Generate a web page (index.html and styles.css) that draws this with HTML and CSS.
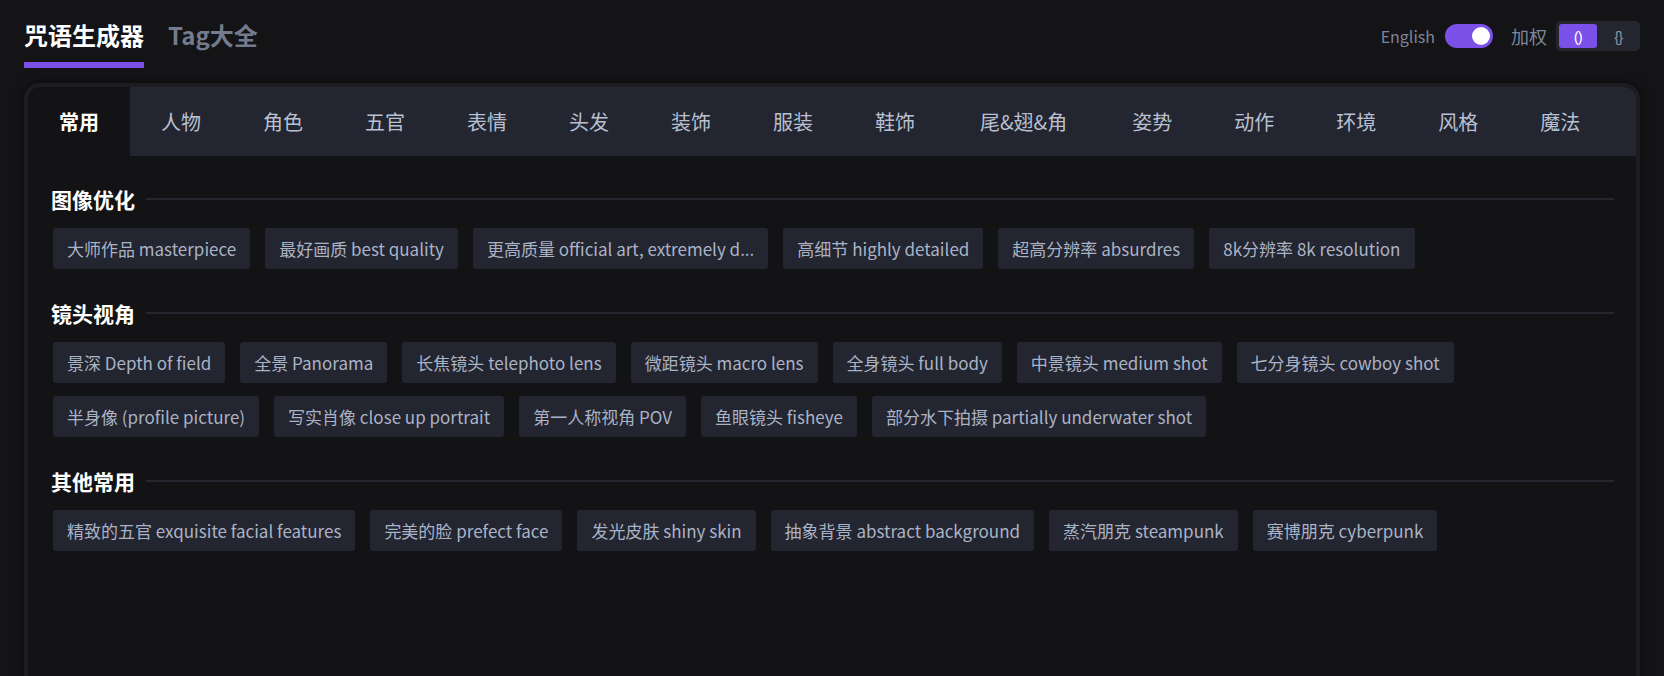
FILE: index.html
```html
<!DOCTYPE html>
<html lang="zh-CN">
<head>
    <meta charset="UTF-8">
    <meta name="viewport" content="width=device-width, initial-scale=1.0">
    <title>咒语生成器</title>
    <link rel="stylesheet" href="styles.css">
</head>
<body>
    <div class="topbar">
        <nav class="main-nav">
            <a class="main-tab active">咒语生成器</a>
            <a class="main-tab">Tag大全</a>
        </nav>
        <div class="controls">
            <span class="lang-label">English</span>
            <span class="switch on"><span class="knob"></span></span>
            <span class="weight-label">加权</span>
            <div class="seg">
                <span class="seg-item active">()</span>
                <span class="seg-item">{}</span>
            </div>
        </div>
    </div>

    <div class="card">
        <div class="tabs">
            <span class="tab active">常用</span>
            <span class="tab">人物</span>
            <span class="tab">角色</span>
            <span class="tab">五官</span>
            <span class="tab">表情</span>
            <span class="tab">头发</span>
            <span class="tab">装饰</span>
            <span class="tab">服装</span>
            <span class="tab">鞋饰</span>
            <span class="tab wide">尾&amp;翅&amp;角</span>
            <span class="tab">姿势</span>
            <span class="tab">动作</span>
            <span class="tab">环境</span>
            <span class="tab">风格</span>
            <span class="tab">魔法</span>
        </div>

        <div class="tab-body">
            <section class="group">
                <h3 class="group-title">图像优化</h3>
                <div class="chips">
                    <span class="chip">大师作品 masterpiece</span>
                    <span class="chip">最好画质 best quality</span>
                    <span class="chip">更高质量 official art, extremely d...</span>
                    <span class="chip">高细节 highly detailed</span>
                    <span class="chip">超高分辨率 absurdres</span>
                    <span class="chip">8k分辨率 8k resolution</span>
                </div>
            </section>

            <section class="group">
                <h3 class="group-title">镜头视角</h3>
                <div class="chips">
                    <span class="chip">景深 Depth of field</span>
                    <span class="chip">全景 Panorama</span>
                    <span class="chip">长焦镜头 telephoto lens</span>
                    <span class="chip">微距镜头 macro lens</span>
                    <span class="chip">全身镜头 full body</span>
                    <span class="chip">中景镜头 medium shot</span>
                    <span class="chip">七分身镜头 cowboy shot</span>
                    <span class="chip">半身像 (profile picture)</span>
                    <span class="chip">写实肖像 close up portrait</span>
                    <span class="chip">第一人称视角 POV</span>
                    <span class="chip">鱼眼镜头 fisheye</span>
                    <span class="chip">部分水下拍摄 partially underwater shot</span>
                </div>
            </section>

            <section class="group">
                <h3 class="group-title">其他常用</h3>
                <div class="chips">
                    <span class="chip">精致的五官 exquisite facial features</span>
                    <span class="chip">完美的脸 prefect face</span>
                    <span class="chip">发光皮肤 shiny skin</span>
                    <span class="chip">抽象背景 abstract background</span>
                    <span class="chip">蒸汽朋克 steampunk</span>
                    <span class="chip">赛博朋克 cyberpunk</span>
                </div>
            </section>
        </div>
    </div>
</body>
</html>
```

FILE: styles.css
```css
* { margin: 0; padding: 0; box-sizing: border-box; }
html, body { background: #141417; }
body { font-family: "Noto Sans CJK SC", "Noto Sans", sans-serif; color: #b4bccd; padding: 0 24px; height: 676px; overflow: hidden; }

/* top bar */
.topbar { display: flex; justify-content: space-between; align-items: flex-start; padding-top: 18px; margin-bottom: 15px; }
.main-nav { display: flex; gap: 24px; }
.main-tab { font-size: 24px; font-weight: 700; line-height: 34px; padding-bottom: 10px; border-bottom: 6px solid transparent; color: #737b8c; cursor: pointer; }
.main-tab.active { color: #fff; border-bottom-color: #7b50e8; }

.controls { display: flex; align-items: center; margin-top: 3px; height: 30px; }
.lang-label { font-size: 16px; color: #7d869a; margin-right: 10px; }
.switch { width: 48px; height: 24px; border-radius: 12px; background: #3a3d4a; position: relative; }
.switch.on { background: #7b50e8; }
.knob { position: absolute; right: 3px; top: 3px; width: 18px; height: 18px; border-radius: 50%; background: #fff; }
.weight-label { font-size: 18px; color: #7d869a; margin: 0 9px 0 18px; }
.seg { display: flex; width: 84px; height: 30px; padding: 3px; gap: 3px; background: #23252f; border-radius: 5px; }
.seg-item { flex: 1; display: flex; align-items: center; justify-content: center; font-family: "Liberation Sans", sans-serif; font-size: 15px; letter-spacing: -1px; color: #8b93a7; border-radius: 3px; }
.seg-item.active { background: #7b50e8; color: #fff; }

/* card */
.card { background: #131316; border: 4px solid #1d1d21; border-radius: 16px; height: 700px; overflow: hidden; box-shadow: 0 0 8px rgba(0,0,0,0.5); }
.tabs { display: flex; height: 69px; background: #232530; }
.tab { padding: 0 31px; font-size: 20px; line-height: 69px; color: #b8c0d1; white-space: nowrap; cursor: pointer; }
.tab.wide { padding: 0 34px; }
.tab.active { background: #131316; color: #fff; font-weight: 700; }

.tab-body { padding: 29px 22px 0 23px; }
.group { margin-bottom: 30px; }
.group-title { display: flex; align-items: center; gap: 11px; font-size: 21px; font-weight: 700; line-height: 28px; color: #fff; margin-bottom: 15px; }
.group-title::after { content: ""; flex: 1; height: 2px; background: #25272f; }
.chips { display: flex; flex-wrap: wrap; gap: 13px 15px; margin-left: 2px; }
.chip { height: 41px; line-height: 41px; padding: 0 14px; font-size: 17px; color: #aab3c5; background: #232530; border-radius: 3px; white-space: nowrap; cursor: pointer; }
```
